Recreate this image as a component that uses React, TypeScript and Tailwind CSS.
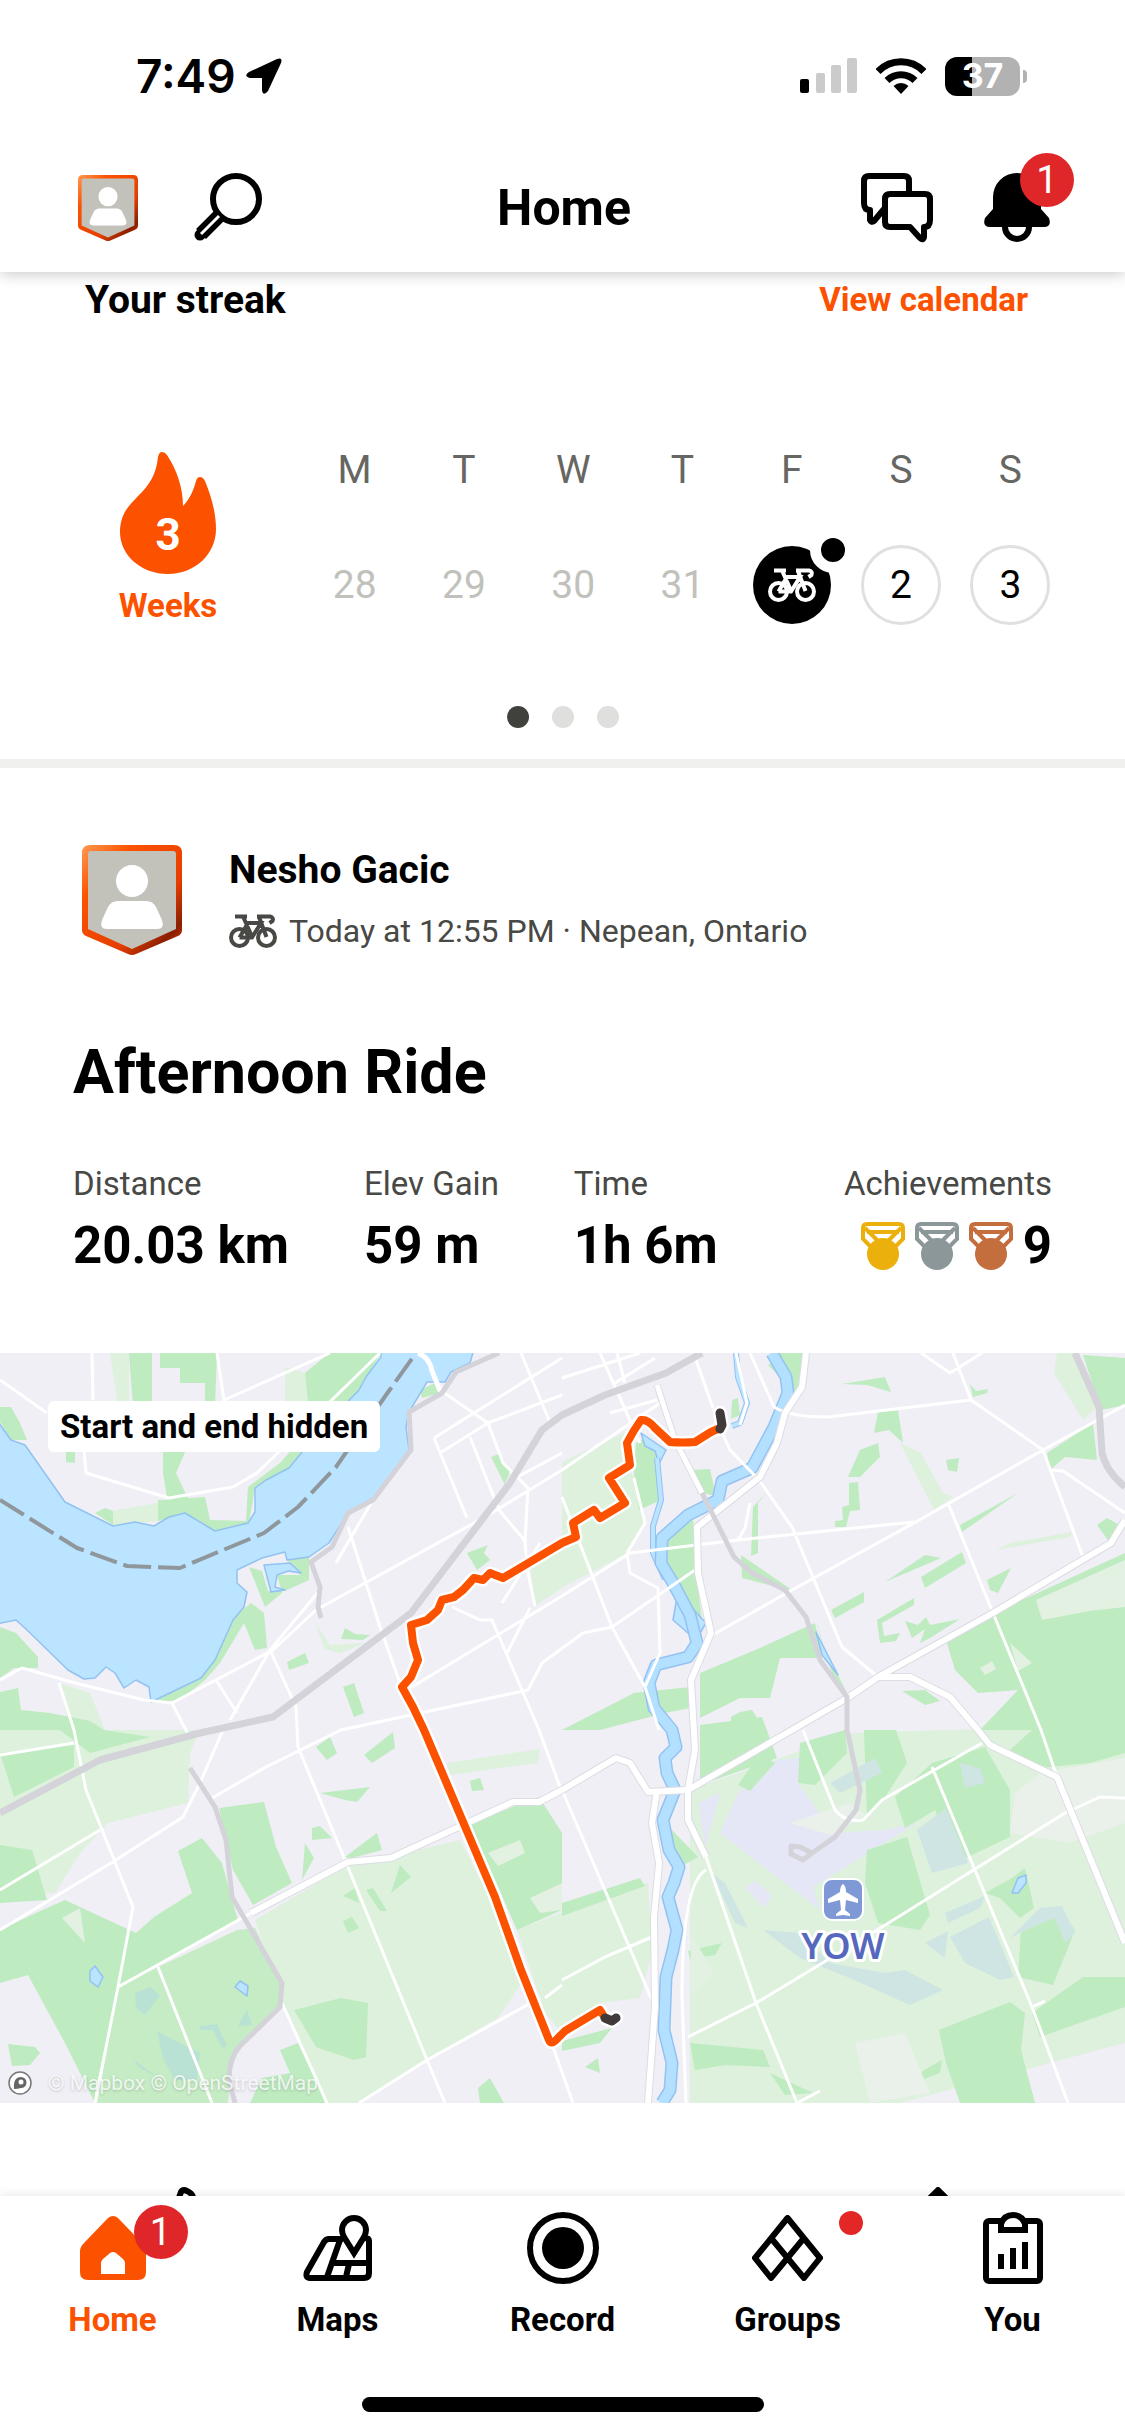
import React, { useState } from 'react';

interface IconProps {
	className?: string;
}

const Avatar = ({ className, id }: IconProps & { id: string }) => (
	<svg viewBox="0 0 100 110" className={className} aria-hidden="true">
		<defs>
			<linearGradient id={id} x1="0" y1="0" x2="1" y2="1">
				<stop offset="0" stopColor="#ff9a52" />
				<stop offset="0.25" stopColor="#fc5200" />
				<stop offset="0.65" stopColor="#e63e00" />
				<stop offset="0.85" stopColor="#8a1f00" />
				<stop offset="1" stopColor="#e63e00" />
			</linearGradient>
		</defs>
		<path
			d="M8 0h84q8 0 8 8v77q0 4-4 6L54 109q-4 2-8 0L4 91q-4-2-4-6V8q0-8 8-8z"
			fill={`url(#${id})`}
		/>
		<path d="M6 9q0-3 3-3h82q3 0 3 3v75L50 104 6 84z" fill="#c2c2bb" />
		<circle cx="50" cy="36" r="16" fill="#fff" />
		<path
			d="M36 56h28q7 0 10 6l6 13q3 9-5 9H25q-8 0-5-9l6-13q3-6 10-6z"
			fill="#fff"
		/>
	</svg>
);

const BikeIcon = ({ className }: IconProps) => (
	<svg
		viewBox="0 0 48 34"
		className={className}
		fill="none"
		stroke="currentColor"
		strokeWidth="4"
		aria-hidden="true"
	>
		<circle cx="10.5" cy="23.5" r="8.5" />
		<circle cx="37.5" cy="23.5" r="8.5" />
		<path d="M6 2.5h12M14 2.5l9 20M10.5 23.5 19 9h13L23 23.5H10.5M28 2.5h13q4 1 2.500 4.500l-3 2M30 3l7.500 20" />
	</svg>
);

const SearchIcon = () => (
	<svg viewBox="0 0 70 70" className="size-[70px]" fill="none" aria-hidden="true">
		<circle cx="44" cy="26" r="23" stroke="#000" strokeWidth="6" />
		<path d="M29 41 9 61" stroke="#000" strokeWidth="14" />
		<path d="M11 59 8 62" stroke="#000" strokeWidth="11" strokeLinecap="round" />
		<path d="M27 43 9 61" stroke="#fff" strokeWidth="3" />
	</svg>
);

const ChatIcon = () => (
	<svg
		viewBox="0 0 72 70"
		className="h-[70px] w-[72px]"
		fill="none"
		stroke="#000"
		strokeWidth="6"
		strokeLinejoin="round"
		aria-hidden="true"
	>
		<path d="M48 20V8q0-5-5-5H8Q3 3 3 8v22q0 7 6 7v10q1 3 4 1l10-12" />
		<path d="M29 21h35q5 0 5 5v21q0 7-6 7v10q-1 4-4 1L49 54H29q-5 0-5-5V26q0-5 5-5z" />
	</svg>
);

const BellIcon = () => (
	<svg viewBox="0 0 66 70" className="h-[70px] w-[66px]" aria-hidden="true">
		<circle cx="33" cy="54" r="12" fill="#fff" stroke="#000" strokeWidth="6" />
		<path d="M9 24a24 24 0 0 1 48 0v12l8 9q3 9-5 9H6q-8 0-5-9l8-9z" />
	</svg>
);

const FlameIcon = () => (
	<svg viewBox="0 0 96 122" className="h-[122px] w-[96px]" aria-hidden="true">
		<path
			d="M38 5q1-5 4-5t5 3c10 15 16 33 16 51 7-7 11-17 13-25q1-4 4-4t5 4c7 17 11 33 11 48 0 25-21 45-48 45S0 103 0 80C0 45 34 46 38 5z"
			fill="#fc5200"
		/>
	</svg>
);

const Medal = ({ color }: { color: string }) => (
	<svg
		viewBox="0 0 44 48"
		className="h-[48px] w-[44px]"
		fill="none"
		stroke={color}
		strokeWidth="4"
		aria-hidden="true"
	>
		<path d="M10 25l-8-8V6q0-4 4-4h32q4 0 4 4v11l-8 8" />
		<path d="M6 10h32M4 6l14 14M40 6 26 20" />
		<circle cx="22" cy="32" r="16" fill={color} stroke="none" />
	</svg>
);

const HomeIcon = () => (
	<svg viewBox="0 0 66 64" className="h-[64px] w-[66px]" aria-hidden="true">
		<path
			d="M28 2q5-4 10 0l24 25q4 4 4 8v21q0 8-8 8H8q-8 0-8-8V35q0-4 4-8z"
			fill="#fc5200"
		/>
		<path d="M21 58V47q0-2 2-4l7-6q3-2 6 0l7 6q2 2 2 4v11z" fill="#fff" />
	</svg>
);

const MapsIcon = () => (
	<svg
		viewBox="0 0 69 66"
		className="h-[66px] w-[69px]"
		fill="none"
		stroke="#000"
		strokeWidth="6"
		aria-hidden="true"
	>
		<path d="M40 24H26q-3 0-5 3L4 57q-2 6 3 6h54q5 0 5-5V26q0-3-4-3" />
		<path d="M37 25 24 62M28 48h38M46 49l-3 13" />
		<path
			d="M51 38 41 22q-2-4-2-7a12 12 0 0 1 24 0q0 3-2 7z"
			fill="#fff"
		/>
	</svg>
);

const RecordIcon = () => (
	<svg viewBox="0 0 72 72" className="size-[72px]" aria-hidden="true">
		<circle cx="36" cy="36" r="33" fill="none" stroke="#000" strokeWidth="6" />
		<circle cx="36" cy="36" r="21" />
	</svg>
);

const GroupsIcon = () => (
	<svg
		viewBox="0 0 71 66"
		className="h-[66px] w-[71px]"
		fill="none"
		stroke="#000"
		strokeWidth="6"
		strokeLinejoin="round"
		aria-hidden="true"
	>
		<path d="M35.500 3 3 43l16 20 16.500-20L52 63l16-20z" />
		<path d="M19 23l16.500 20L52 23" />
	</svg>
);

const YouIcon = () => (
	<svg
		viewBox="0 0 60 72"
		className="h-[72px] w-[60px]"
		fill="none"
		stroke="#000"
		strokeWidth="6"
		aria-hidden="true"
	>
		<rect x="3" y="9" width="54" height="60" rx="3" />
		<path d="M18 18v-6q3-9 12-9t12 9v6z" fill="#fff" />
		<path d="M18 42v15M30 36v21M42 30v27" />
	</svg>
);

const Badge = ({ count, className }: { count: number; className: string }) => (
	<span
		className={`absolute flex size-[54px] items-center justify-center rounded-full bg-[#df2729] text-[38px] leading-none font-normal text-white ${className}`}
	>
		{count}
	</span>
);

const StatusBar = () => (
	<div className="flex h-10 items-center justify-between pr-[98px] pl-[136px]">
		<div className="flex items-center gap-[10px]">
			<span className="font-[Inter,sans-serif] text-[46px] leading-10 font-semibold">
				7:49
			</span>
			<svg viewBox="0 0 36 36" className="size-9" aria-hidden="true">
				<path d="M31 1q6-2 4 4L22 33q-5 6-6-1V20H4q-7-2-1-6z" />
			</svg>
		</div>
		<div className="flex items-center gap-[19px]">
			<svg viewBox="0 0 57 36" className="h-9 w-[57px]" aria-hidden="true">
				<rect x="0" y="21" width="9" height="14" rx="2" />
				<g fill="#cbcbcb">
					<rect x="16" y="15" width="9" height="20" rx="2" />
					<rect x="31" y="7" width="10" height="28" rx="2" />
					<rect x="47" y="0" width="10" height="35" rx="2" />
				</g>
			</svg>
			<svg
				viewBox="0 0 50 36"
				className="h-9 w-[50px]"
				fill="none"
				stroke="#000"
				strokeWidth="7"
				aria-hidden="true"
			>
				<path d="M2 13.500a32 32 0 0 1 46 0M11 22.500a20 20 0 0 1 28 0" />
				<path d="M25 36l-7.500-8a11 11 0 0 1 15 0z" fill="#000" stroke="none" />
			</svg>
			<div className="flex items-center gap-[3px]">
				<span className="flex h-[39px] w-[75px] items-center justify-center rounded-[12px] bg-[linear-gradient(to_right,#000_36%,#b2b2b2_36%)] font-[Inter,sans-serif] text-[34px] leading-none font-bold text-white">
					37
				</span>
				<span className="h-[13px] w-1 rounded-r-full bg-[#b2b2b2]" />
			</div>
		</div>
	</div>
);

const Header = () => (
	<header className="relative z-10 bg-white pt-14 pb-7 shadow-[0_2px_14px_rgba(0,0,0,0.22)]">
		<StatusBar />
		<div className="mt-[76px] grid h-[72px] grid-cols-[1fr_auto_1fr] items-center pr-[75px] pl-[78px]">
			<div className="flex items-center gap-[54px]">
				<button type="button" aria-label="Profile">
					<Avatar id="ring-small" className="h-[66px] w-[60px]" />
				</button>
				<button type="button" aria-label="Search">
					<SearchIcon />
				</button>
			</div>
			<h1 className="text-[50px] leading-[60px] font-bold">Home</h1>
			<div className="flex items-center justify-end gap-[51px]">
				<button type="button" aria-label="Messages">
					<ChatIcon />
				</button>
				<button type="button" aria-label="Notifications" className="relative">
					<BellIcon />
					<Badge count={1} className="-top-5 left-9" />
				</button>
			</div>
		</div>
	</header>
);

const days = [
	{ letter: 'M', date: 28, state: 'past' },
	{ letter: 'T', date: 29, state: 'past' },
	{ letter: 'W', date: 30, state: 'past' },
	{ letter: 'T', date: 31, state: 'past' },
	{ letter: 'F', date: 1, state: 'ride' },
	{ letter: 'S', date: 2, state: 'next' },
	{ letter: 'S', date: 3, state: 'next' },
];

const Day = ({ date, state }: { date: number; state: string }) => {
	if (state === 'ride') {
		return (
			<span className="relative flex size-20 items-center justify-center">
				<span className="flex size-[78px] items-center justify-center rounded-full bg-black text-white">
					<BikeIcon className="h-[34px] w-12" />
				</span>
				<span className="absolute -top-[18px] -right-6 size-[46px] rounded-full border-[11px] border-white bg-black" />
			</span>
		);
	}
	if (state === 'next') {
		return (
			<span className="flex size-20 items-center justify-center rounded-full border-[3px] border-[#e0e0e0]">
				{date}
			</span>
		);
	}
	return (
		<span className="flex size-20 items-center justify-center text-[#c1c1bb]">
			{date}
		</span>
	);
};

const Streak = () => {
	const [page, setPage] = useState(0);

	return (
		<section className="border-b-[9px] border-[#f0f0ee] pb-[31px]">
			<div className="flex items-center justify-between pr-[97px] pl-[85px]">
				<h2 className="text-[39px] leading-[56px] font-bold">Your streak</h2>
				<a
					href="#calendar"
					className="text-[33px] leading-[56px] font-bold text-[#fc5200]"
				>
					View calendar
				</a>
			</div>

			<div className="mt-[124px] flex pr-[60px]">
				<div className="flex w-[300px] shrink-0 flex-col items-center pl-9">
					<div className="relative">
						<FlameIcon />
						<span className="absolute inset-x-0 bottom-4 text-center text-[44px] leading-[46px] font-bold text-white">
							3
						</span>
					</div>
					<span className="mt-3 text-[33px] leading-10 font-bold text-[#fc5200]">
						Weeks
					</span>
				</div>
				<ul className="grid grow grid-cols-7 text-[39px] leading-9">
					{days.map((day, i) => (
						<li key={i} className="flex flex-col items-center gap-[57px]">
							<span className="text-[#666662]">{day.letter}</span>
							<Day date={day.date} state={day.state} />
						</li>
					))}
				</ul>
			</div>

			<div className="mt-20 flex justify-center gap-[23px]">
				{[0, 1, 2].map((n) => (
					<button
						key={n}
						type="button"
						aria-label={`Page ${n + 1}`}
						onClick={() => setPage(n)}
						className={
							n === page
								? 'size-[22px] rounded-full bg-[#40403d]'
								: 'size-[22px] rounded-full bg-[#dfdfdd]'
						}
					/>
				))}
			</div>
		</section>
	);
};

const parks = [
	'M129 0H217L215 54H205V30H180V15H160V0H152V54H133Z',
	'M329 0H381L360 37 323 74 298 104 289 115 255 135 249 170 215 178 185 160 158 168 158 147 205 144 210 167 246 168 248 134 280 110 322 62 308 50 305 20Z',
	'M163 99H185L176 120 190 150 168 150 163 120Z',
	'M0 54H11L20 70 27 87H11L0 69Z',
	'M95 160 105 155 113 158V172Z',
	'M66 99H75V110L66 109Z',
	'M249 214 262 218 268 238 285 238 309 227V203L287 207 300 222 277 222 282 240 265 254Z',
	'M226 256 236 262 251 250 264 260 267 295 255 297 244 270 220 310 205 327 180 347 150 350 201 324 215 307 233 266Z',
	'M0 274 16 280 38 304V315H14L0 325Z',
	'M0 339 18 335 21 357 50 360 90 368 104 377 150 384 90 400 60 377H0Z',
	'M0 400 74 392V414L14 444Z',
	'M0 492 32 497 47 547 0 550Z',
	'M65 547 136 580 154 564 192 540 178 498 202 485 222 510 232 547 238 567 160 612 118 634 95 740V750L65 690 28 622 0 630V577L36 560Z',
	'M219 455 264 449 276 494 292 530 253 552 233 517Z',
	'M294 657 341 645 368 650 366 704 354 707 316 694Z',
	'M280 697 298 690 327 750H250L262 725 290 720Z',
	'M470 470 539 444 562 480V557L517 577Z',
	'M8 691 35 694 40 700 30 712 12 713Z',
	'M478 735 490 725 504 750H480Z',
	'M316 394 330 384 337 400 327 407Z',
	'M364 402 393 379 395 395 372 410Z',
	'M320 440 370 434 357 449 345 447Z',
	'M312 475 320 473 332 485 312 487Z',
	'M345 504 377 480 382 497 352 505Z',
	'M305 490 314 505 302 527Z',
	'M343 543 355 535 359 550Z',
	'M391 540 400 512 411 524Z',
	'M366 537 373 535 387 558 380 558Z',
	'M343 568 352 564 359 575 348 580Z',
	'M470 428 480 425 484 437 472 438Z',
	'M491 104 499 101 510 118 505 132Z',
	'M467 200 488 192 484 200 490 207 477 217Z',
	'M287 309 305 300 309 310 289 317Z',
	'M343 334 354 330 364 360 354 364Z',
	'M345 275 355 281 370 282 363 287 341 286Z',
	'M420 37 435 30 440 40 422 45Z',
	'M634 120 636 90 645 85 659 105 661 147 639 157Z',
	'M660 187 693 166 696 220 702 267 681 244 670 217Z',
	'M777 0H806L802 30 790 50 786 24Z',
	'M768 12 776 8 784 28Z',
	'M692 117 710 116 716 143 702 140Z',
	'M732 47 738 45 740 62 731 66Z',
	'M842 31 885 24 891 39 867 32Z',
	'M878 59 898 57 903 90 889 77 874 80Z',
	'M860 97 878 90 880 104 860 124H848Z',
	'M849 130 858 129 860 157 850 158 846 174H835V168L843 167 842 154 849 152Z',
	'M946 107 959 105 957 119 948 117Z',
	'M753 154 767 139 758 150V200L751 203Z',
	'M970 31 976 38 988 36 987 40 973 44Z',
	'M741 202 792 237 780 235 742 225Z',
	'M885 229 941 205 925 202Z',
	'M960 172 1018 140 962 179Z',
	'M921 224 962 199 966 210 925 235Z',
	'M831 257 864 239V249L835 265Z',
	'M987 227 1011 215 998 240 990 237Z',
	'M1047 100 1093 70 1097 107 1065 104 1050 117Z',
	'M1083 2 1125 5V52L1101 57Z',
	'M1097 172 1107 165 1125 175 1110 190Z',
	'M877 267 914 245V252L882 270 884 283 900 280 896 288 880 290Z',
	'M905 268 918 272 926 264 930 272 960 266 930 285 920 290 925 276 912 285Z',
	'M946 287 993 260 1042 238 1125 200V377H980L1018 337 978 340 955 317Z',
	'M700 320 760 295 815 270 822 305 780 305 770 345 740 345 700 365Z',
	'M562 377 634 340 690 334V355L665 360 600 377Z',
	'M731 364 740 359 752 357 765 377H731Z',
	'M700 372 762 364 777 405 700 432Z',
	'M902 338 925 337 940 348 925 352Z',
	'M815 265 822 290 847 340 835 330Z',
	'M867 497 907 484 930 562 920 577 878 570 865 530Z',
	'M895 444 932 410 985 394 1010 437V484L955 510 935 457 905 475Z',
	'M1010 397 1040 370H1125V400L1090 410 1040 415Z',
	'M864 377H896L907 410 885 444 867 462Z',
	'M800 390 845 377 847 400 815 432 798 430Z',
	'M1021 577 1057 554 1075 577 1053 632 1018 624Z',
	'M939 677 1010 649 1025 660 1021 697 1035 750H960L946 710Z',
	'M1032 660 1083 624 1125 624V654L1040 684Z',
	'M985 540 1012 525 1025 515 1034 555 1020 565 1000 545Z',
	'M672 477 698 504 680 514 668 490Z',
	'M690 690 763 697 770 714 725 712 695 717Z',
	'M770 720 813 740 785 742Z',
	'M907 727 942 707 940 720 908 732Z',
	'M585 714 598 705 600 720Z',
	'M562 688 612 675 600 690 562 698Z',
	'M562 550 640 525 645 533 562 563Z',
	'M688 598 722 590 715 602 690 606Z',
	'M738 432 760 400 775 410 750 438Z',
	'M1085 455 1110 450 1105 470 1095 472Z',
];

const lightParks = [
	'M0 377H200L190 400 188 450 108 470 80 500 55 540H0Z',
	'M59 330 90 340 105 377H70Z',
	'M255 567 345 514 460 487 528 620 499 664 427 707 359 750H323L285 654Z',
	'M517 577 560 560 648 530 652 600 640 645 600 650 562 680 545 660Z',
	'M562 109 628 78 629 115 634 125 645 170 627 200 562 235 535 253 530 213 562 190Z',
	'M447 410 540 396 538 410 450 422Z',
	'M315 270 330 292 365 290 340 300 325 296Z',
	'M900 90 921 100 943 140 953 144 934 157Z',
	'M996 197 1010 190 1072 179 1070 184Z',
	'M1057 0H1077L1097 54 1083 67 1054 20Z',
	'M690 437 780 405 850 380 1125 372V690L900 750H690Z',
	'M110 0H129V54H118Z',
	'M100 160 158 150V168L113 172Z',
	'M285 14 305 20 308 50 285 54Z',
];

const minorRoads = [
	'M750 0 774 54Q790 64 828 64L971 47 1043 97 1083 204',
	'M921 0 950 20 982 0M953 0 971 47',
	'M1125 52 1043 97 914 170 792 237 709 284',
	'M630 200 738 187 914 169',
	'M948 150 993 260 1041 377 1057 424',
	'M759 127 792 174 842 294 878 324',
	'M695 4 720 75 730 97 759 127',
	'M562 144 612 274 645 334 659 377',
	'M0 27 47 60M92 0 93 47M84 97 86 120 169 145 233 134 257 120 380 0M217 0 224 47 330 0',
	'M434 85 562 5M434 85 467 165M470 84 499 157 525 188M440 37 488 70 562 42',
	'M488 70 503 110 528 135 525 188 527 215 535 253M521 0 549 67',
	'M440 100 488 70M316 257 485 164 562 117 660 50',
	'M0 327 22 315 75 330 144 347 172 350 273 297 316 257',
	'M348 174 381 277 400 330M402 340 562 243 630 200',
	'M0 537 100 477M0 577 111 510 183 464 200 430 223 377',
	'M59 330 74 377 86 437 133 554 118 634 95 750M158 614 212 750M118 634 251 560',
	'M212 445 266 414 341 377 528 337 542 310 583 280 612 274 695 217',
	'M270 297 296 354 298 394 345 507 427 707 445 750',
	'M359 750 427 707 540 645',
	'M562 627 605 604 652 584M562 437 655 654',
	'M688 684 756 650 882 574 1065 460 1100 444 1125 445',
	'M932 414 1032 654 1068 750M1032 654 1045 648',
	'M803 377 835 457Q845 470 863 467L882 447 982 390',
	'M452 254 480 267 492 267 539 377 560 434',
	'M282 650 327 750M553 694 573 750M172 350 190 385M216 327 237 360M320 237 270 297 230 367',
	'M706 504 756 650 797 750 820 738',
	'M686 750 682 644Q682 530 706 517',
	'M373 147 336 210M0 402 74 390',
	'M600 0 640 90M617 0 625 30M562 25 640 0M615 30 655 5M610 60 657 47',
	'M627 200 630 220 658 235 660 300 645 334M634 125 645 170 627 200',
	'M750 150 745 175 738 187M736 0 747 50 740 72',
	'M1050 117 1063 118 1125 160M545 645 562 632',
	'M506 130 562 100M502 250 540 190M507 300 530 255',
];

const riverPath =
	'M772 0 786 24 788 40 774 74 752 115 722 128 718 147 688 162 662 185 661 210 673 230 690 262 697 290 688 304 656 312 649 330 654 355 672 377 676 394 665 405 667 420 675 437 663 467 669 497 679 514 674 530 668 544 677 577 673 597 666 624 664 677 672 710 670 737 662 750';

const routePath =
	'M720 75 711 79 695 89Q683 90 670 89L655 75Q648 66 641 67 633 78 627 90L630 112 609 125 625 150 600 165 594 157 573 170 576 184 562 190 503 225 490 220 483 227 474 225 463 237 454 244 442 247 438 257 427 267 411 272 413 290 418 307 411 324 402 334 413 354 424 377 495 544 521 617 549 687Q551 692 556 687L565 678 600 657 605 665';

const RouteMap = () => (
	<svg
		viewBox="0 0 1125 750"
		className="block w-full"
		fill="none"
		strokeLinejoin="round"
		role="img"
		aria-label="Map of the ride"
	>
		<rect width="1125" height="750" fill="#f0eff5" />
		<path d={lightParks.join('')} fill="#ddf1dd" />
		<path
			d="M118 634 158 614 237 577 255 575 283 634 279 657 233 700 228 750H97Z"
			fill="#c6ecc5"
		/>
		<path
			d="M738 440 777 407 806 404 800 434 835 480 885 477 917 470 813 534 820 557 720 480ZM698 450 720 440 705 495ZM745 535 755 528 772 542 765 555Z"
			fill="#e5e7f7"
		/>
		<path d={parks.join('')} fill="#beebc0" />
		<path
			d="M1036 247 1125 207V254L1090 258 1042 267ZM1010 290 1032 310 1018 318ZM980 315 992 308 996 316 985 322ZM488 500 520 487 525 500 498 513ZM530 545 562 530V557L540 560ZM80 555 85 590 62 565ZM690 580 715 620 692 640Z"
			fill="#e2f1e1"
		/>
		<path
			d="M1040 420 1125 405V470L1070 490 1010 480 1015 440ZM790 470 850 450 865 462 830 482ZM855 690 905 680 930 740 870 750Z"
			fill="#e9f1ea"
		/>
		<path
			d="M917 477 946 455 968 510 932 520ZM950 584 989 564 1014 624 1000 627 965 610ZM763 577 800 580 830 610 885 620 905 617 943 637 910 652 850 625 800 605ZM960 410 980 415 985 430 965 435ZM945 560 985 543 980 555 948 570ZM830 430 875 405 882 420 840 440ZM712 520 725 530 748 575 735 570ZM925 590 948 578 945 605ZM1010 585 1040 555 1062 553 1075 580 1065 590 1055 565 1030 575Z"
			fill="#cfe5e3"
		/>
		<path
			d="M157 678 180 690 200 700 197 727 175 727 163 705ZM135 640 150 634 160 642 145 662 136 655ZM200 673 217 671 227 693 222 695 213 677 200 677ZM132 705 158 725 140 715ZM238 673 247 657 252 672Z"
			fill="#b9e2d4"
		/>

		{/* water */}
		<g fill="#bae4ff" stroke="#93c2f2" strokeWidth="1.500">
			<path d="M-4 66 11 87 25 92 65 149 113 173 135 169 154 173 169 164 185 160 215 178 248 170 255 159V135L266 127 289 115 298 104 323 74 359 37 366 24 381 4V-4H474L470 10 451 19 445 29H427L409 59 406 74 409 97 398 114 373 145 348 160 329 190 309 204 287 207 285 199 262 205 237 217V230L247 239 244 254 233 267 215 307 201 325 151 349 149 334 136 327 124 335 115 320 106 314 95 325 84 326 68 317 27 277 16 267-4 271Z" />
			<path d="M264 212 290 210 301 220 288 218 277 222 275 234 285 237 271 239Z" />
			<path d="M641 80 666 97 659 111 655 98 645 93Z" />
			<path d="M816 279 838 322 822 302Z" />
			<path d="M669 227 677 244 673 267 696 287 706 270 691 254 679 234Z" />
			<path d="M90 618 95 613 103 624 98 634 90 628ZM235 634 240 628 248 633 247 643ZM1012 540 1018 525 1026 522 1026 530 1018 540Z" />
		</g>
		<path
			d="M657 105 661 147 653 173 653 200 665 226M736 0 738 24 747 50 740 70 732 73"
			stroke="#93c2f2"
			strokeWidth="6"
		/>
		<path
			d="M657 105 661 147 653 173 653 200 665 226M736 0 738 24 747 50 740 70 732 73"
			stroke="#bae4ff"
			strokeWidth="4"
		/>
		<path d={riverPath} stroke="#93c2f2" strokeWidth="13" />
		<path d={riverPath} stroke="#b3e0ff" strokeWidth="10" />
		<path
			d="M0 147 77 195 127 213 180 215 264 180 298 154 336 114 386 42 416 0"
			stroke="#8f979c"
			strokeWidth="4"
			strokeDasharray="28 7"
		/>

		{/* streets */}
		<path d={minorRoads.join('')} stroke="#fff" strokeWidth="3" />
		<g stroke="#dcdce4" strokeWidth="8">
			<path d="M806 0 802 34 785 60 777 90 760 124 697 174 698 220 711 280 691 327 695 397 688 437 688 467 706 504" />
			<path d="M1125 167 1111 190 993 260 878 324 849 344 792 377 688 437 648 439 630 410 616 405 562 437 539 449 513 449 391 505 348 509 251 560" />
			<path d="M657 437 652 470 659 510 654 564 655 654 648 750" />
			<path d="M878 324H910L950 344 978 377 990 392 1057 424 1125 590" />
			<path d="M657 32 675 87 702 140" strokeWidth="7" />
		</g>
		<g stroke="#fff" strokeWidth="6">
			<path d="M806 0 802 34 785 60 777 90 760 124 697 174 698 220 711 280 691 327 695 397 688 437 688 467 706 504" />
			<path d="M1125 167 1111 190 993 260 878 324 849 344 792 377 688 437 648 439 630 410 616 405 562 437 539 449 513 449 391 505 348 509 251 560" />
			<path d="M657 437 652 470 659 510 654 564 655 654 648 750" />
			<path d="M878 324H910L950 344 978 377 990 392 1057 424 1125 590" />
			<path d="M657 32 675 87 702 140M418 0Q430 5 432 18L441 40" strokeWidth="5" />
		</g>

		{/* motorways */}
		<g stroke="#d3d3d9" strokeWidth="5">
			<path
				d="M0 460 100 407 200 380 273 364 411 260 510 130 542 77 562 62 605 42 666 20 702 0"
				strokeWidth="7"
			/>
			<path d="M499 0 456 19 442 40 409 59 411 97 373 147 348 160 332 194 311 209 320 234 318 254 321 265" />
			<path d="M702 140 734 204 752 220 785 237 806 264 820 307 847 344 847 377 860 437 856 457 835 484 812 500 800 494 791 493 791 501 803 507 812 500" />
			<path d="M1075 0 1099 54 1102 100Q1106 118 1125 134" strokeWidth="7" />
			<path d="M190 415 215 454 226 487 232 544 282 630 280 654 240 693Q229 705 229 727L235 750" />
		</g>

		{/* ride */}
		<g strokeLinecap="round">
			<path d={routePath} stroke="#fff" strokeWidth="13" />
			<path d="M720 60 722 72 720 76M605 665 612 668 616 665" stroke="#fff" strokeWidth="14" />
			<path d={routePath} stroke="#fc5200" strokeWidth="8" />
			<path d="M720 60 722 72 720 76M605 665 612 668 616 665" stroke="#403b3a" strokeWidth="9" />
		</g>

		{/* airport */}
		<rect
			x="823"
			y="526"
			width="40"
			height="41"
			rx="9"
			fill="#7f98d6"
			stroke="#fff"
			strokeWidth="2"
		/>
		<path
			d="M843 531q3 2 3 8l12 7v4l-12-3-1 10 5 4v2l-7-1-7 1v-2l5-4-1-10-12 3v-4l12-7q0-6 3-8z"
			fill="#fff"
		/>
		<text
			x="843"
			y="606"
			textAnchor="middle"
			fill="#5568bd"
			stroke="#fff"
			strokeWidth="6"
			paintOrder="stroke"
			className="font-['Noto_Sans',sans-serif] text-[36px] font-semibold"
		>
			YOW
		</text>
	</svg>
);

const Stat = ({ label, children }: { label: string; children: React.ReactNode }) => (
	<div className="flex flex-col gap-3">
		<dt className="text-[33px] leading-10 text-[#484845]">{label}</dt>
		<dd className="text-[51px] leading-[60px] font-bold">{children}</dd>
	</div>
);

const Activity = () => (
	<article className="pt-[77px]">
		<div className="pr-[73px] pl-[73px]">
			<div className="flex gap-[47px] pl-[9px]">
				<Avatar id="ring-large" className="h-[110px] w-[100px]" />
				<div className="flex flex-col gap-3">
					<a href="#athlete" className="text-[39px] leading-[50px] font-bold">
						Nesho Gacic
					</a>
					<p className="flex items-center gap-3 text-[32px] leading-[48px] text-[#484845]">
						<BikeIcon className="h-[34px] w-12" />
						Today at 12:55 PM · Nepean, Ontario
					</p>
				</div>
			</div>

			<h2 className="mt-20 text-[61px] leading-[74px] font-bold">
				Afternoon Ride
			</h2>

			<dl className="mt-[55px] flex gap-[75px]">
				<Stat label="Distance">20.03 km</Stat>
				<Stat label="Elev Gain">59 m</Stat>
				<Stat label="Time">1h 6m</Stat>
				<div className="ml-auto">
					<Stat label="Achievements">
						<span className="flex items-center justify-end gap-[10px]">
							<Medal color="#ecb00c" />
							<Medal color="#8c9799" />
							<Medal color="#c46d3d" />
							9
						</span>
					</Stat>
				</div>
			</dl>
		</div>

		<div className="relative mt-[77px]">
			<RouteMap />
			<span className="absolute top-12 left-12 rounded-md bg-white px-3 text-[33px] leading-[51px] font-bold">
				Start and end hidden
			</span>
			<div className="absolute bottom-1 left-2 flex items-center gap-4 text-[21px] leading-8 text-white/80 [text-shadow:0_1px_3px_rgba(0,0,0,0.2)]">
				<svg viewBox="0 0 24 24" className="size-6" aria-hidden="true">
					<circle cx="12" cy="12" r="11" fill="#fff" stroke="#777" strokeWidth="1.500" />
					<path d="M6 18q-1-12 7-12a5.500 5.500 0 0 1 0 11q-3 1-7 1z" fill="#666" />
					<circle cx="13" cy="11" r="2.500" fill="#fff" />
				</svg>
				© Mapbox © OpenStreetMap
			</div>
		</div>

		<div className="grid grid-cols-3 items-end justify-items-center pt-[84px] pb-10">
			<button type="button" aria-label="Give kudos">
				<svg
					viewBox="0 0 72 72"
					className="size-[72px]"
					fill="none"
					stroke="#000"
					strokeWidth="6"
					strokeLinejoin="round"
					aria-hidden="true"
				>
					<path d="M20 30 29 5q2-3 6-1 7 3 6 10l-4 13h24q6 0 6 6l-5 28q-1 5-7 5H20zM20 30H4v36h16" />
				</svg>
			</button>
			<button type="button" aria-label="Comment">
				<svg
					viewBox="0 0 60 54"
					className="h-[54px] w-[60px]"
					fill="none"
					stroke="#000"
					strokeWidth="6"
					aria-hidden="true"
				>
					<path d="M8 3h44q5 0 5 5v26q0 5-5 5H30L18 50V39H8q-5 0-5-5V8q0-5 5-5z" />
				</svg>
			</button>
			<button type="button" aria-label="Share">
				<svg
					viewBox="0 0 60 72"
					className="h-[72px] w-[60px]"
					fill="none"
					stroke="#000"
					strokeWidth="6"
					strokeLinejoin="round"
					aria-hidden="true"
				>
					<path d="M30 3v42M14 19 30 3l16 16M12 30H4v38h52V30h-8" />
				</svg>
			</button>
		</div>
	</article>
);

const tabs = [
	{ label: 'Home', icon: <HomeIcon />, active: true, badge: 1 },
	{ label: 'Maps', icon: <MapsIcon /> },
	{ label: 'Record', icon: <RecordIcon /> },
	{ label: 'Groups', icon: <GroupsIcon />, dot: true },
	{ label: 'You', icon: <YouIcon /> },
];

const TabBar = () => (
	<nav className="relative z-10 bg-white pt-4 pb-6 shadow-[0_-1px_10px_rgba(0,0,0,0.1)]">
		<ul className="grid grid-cols-5">
			{tabs.map((tab) => (
				<li key={tab.label}>
					<a
						href={`#${tab.label.toLowerCase()}`}
						aria-current={tab.active ? 'page' : undefined}
						className="flex flex-col items-center gap-[18px]"
					>
						<span className="relative flex h-[72px] items-center">
							{tab.icon}
							{tab.badge && (
								<Badge count={tab.badge} className="-top-[7px] left-[54px]" />
							)}
							{tab.dot && (
								<span className="absolute -top-px left-[87px] size-6 rounded-full bg-[#e32626]" />
							)}
						</span>
						<span
							className={
								tab.active
									? 'text-[33px] leading-9 font-bold text-[#fc5200]'
									: 'text-[33px] leading-9 font-bold'
							}
						>
							{tab.label}
						</span>
					</a>
				</li>
			))}
		</ul>
		<div className="mx-auto mt-[59px] h-[15px] w-[402px] rounded-full bg-black" />
	</nav>
);

export default function App() {
	return (
		<div className="flex h-screen flex-col bg-white font-[Roboto,sans-serif] text-black">
			<Header />
			<main className="min-h-0 grow overflow-y-auto [scrollbar-width:none]">
				<Streak />
				<Activity />
			</main>
			<TabBar />
		</div>
	);
}
